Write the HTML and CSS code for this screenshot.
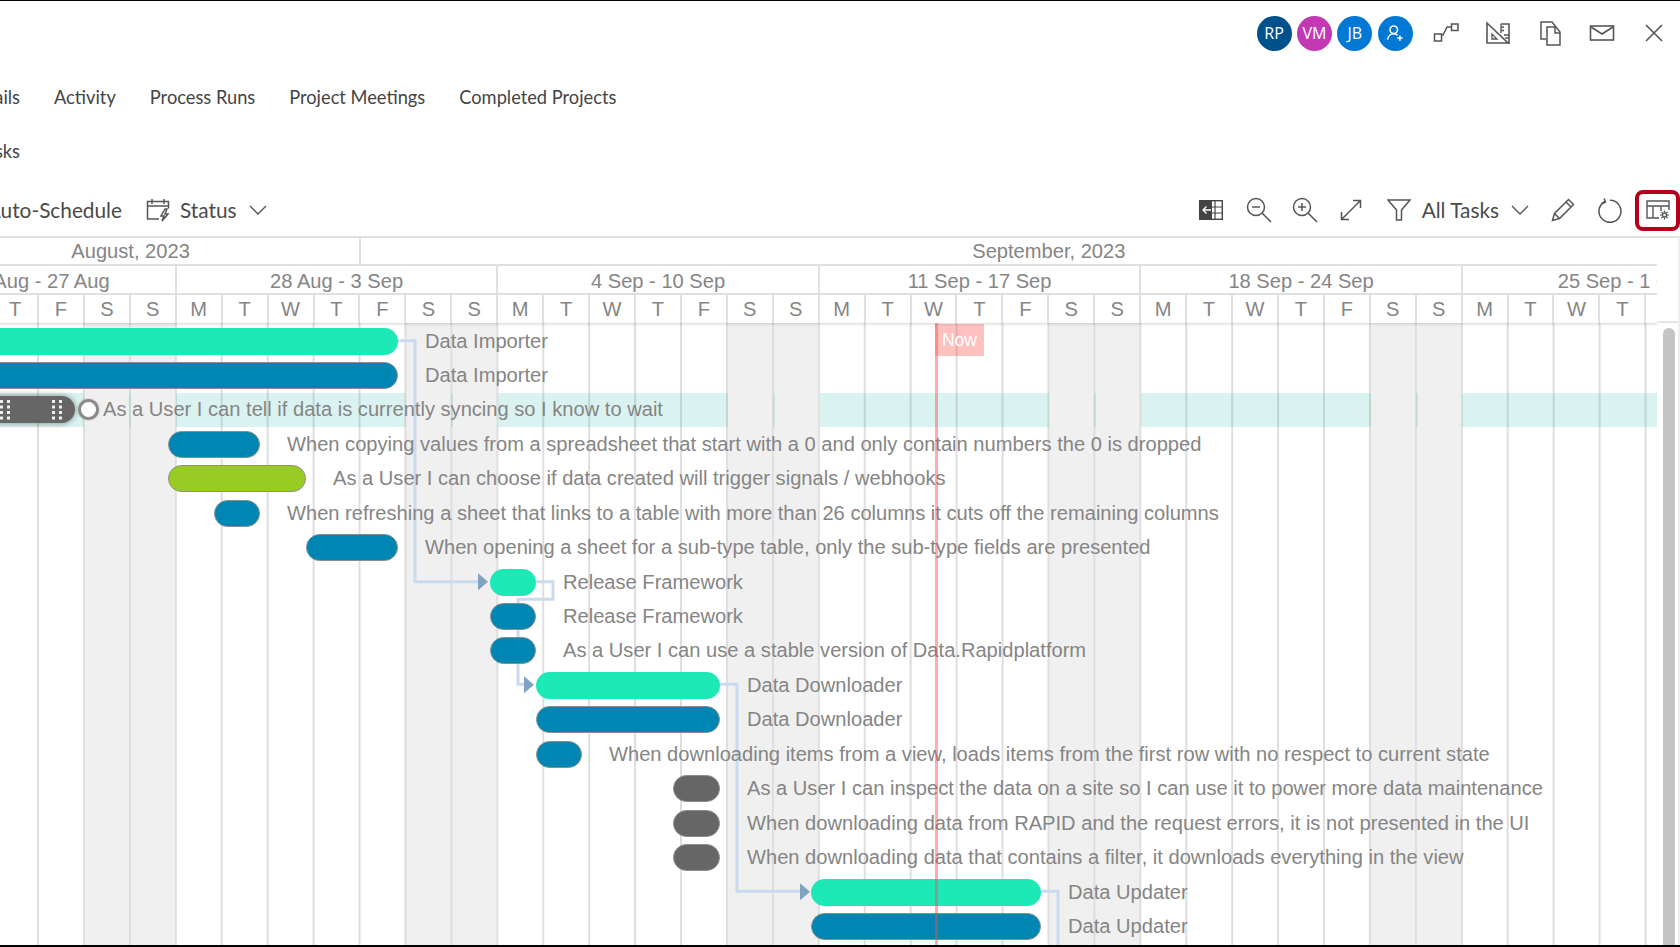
FILE: index.html
```html
<!DOCTYPE html>
<html lang="en">
<head>
<meta charset="utf-8">
<title>Project Gantt</title>
<link rel="stylesheet" href="styles.css">
</head>
<body>
<header class="topbar">
  <div class="avatars">
    <span class="avatar navy">RP</span>
    <span class="avatar magenta">VM</span>
    <span class="avatar azure">JB</span>
    <span class="avatar azure"><svg width="18" height="18" viewBox="0 0 22 22" fill="none" stroke="#fff" stroke-width="1.900"><circle cx="9.500" cy="7" r="4.600"/><path d="M2 19c.5-4 3.500-7 7.500-7 2 0 3.500.7 4.600 1.800"/><path d="M17 14v6.500M13.700 17.200h6.600"/></svg></span>
  </div>
  <div class="topicons">
    <span class="ticon"><svg width="26" height="24" viewBox="0 0 26 24" fill="none" stroke="#555" stroke-width="1.500"><rect x="1.500" y="13" width="7" height="7"/><rect x="18.500" y="3" width="6.500" height="6.500"/><path d="M8.500 14h1.500l4-8h4.500"/></svg></span>
    <span class="ticon"><svg width="26" height="24" viewBox="0 0 26 24" fill="none" stroke="#555" stroke-width="1.600"><path d="M2 2v20h21z"/><path d="M7 13v5h5z" stroke-width="1.300"/><path d="M16 3h8v20" /><path d="M16 3v9M16 6h3M16 9.500h3M19 14h5M20 17h4" stroke-width="1.300"/></svg></span>
    <span class="ticon"><svg width="24" height="26" viewBox="0 0 24 26" fill="none" stroke="#555" stroke-width="1.500"><path d="M8 19H3V2h11l4 5"/><path d="M9 7h9l4 5v13H9z"/><path d="M17 7v6h5"/></svg></span>
    <span class="ticon"><svg width="26" height="18" viewBox="0 0 26 18" fill="none" stroke="#555" stroke-width="1.600"><rect x="1.500" y="2" width="23" height="14"/><path d="M2 3l11 7 11-7"/></svg></span>
    <span class="ticon"><svg width="20" height="20" viewBox="0 0 20 20" fill="none" stroke="#555" stroke-width="1.600"><path d="M2 2l16 16M18 2L2 18"/></svg></span>
  </div>
</header>

<nav class="tabs">
  <span class="clipped tab-first">Details</span>
  <span>Activity</span>
  <span>Process Runs</span>
  <span>Project Meetings</span>
  <span>Completed Projects</span>
</nav>
<nav class="subtabs"><span class="clipped">Tasks</span></nav>

<section class="toolbar">
  <div class="tool-left">
    <span class="clipped auto">Auto-Schedule</span>
    <svg class="status-icon" width="24" height="24" viewBox="0 0 24 24" fill="none" stroke="#555" stroke-width="1.500"><path d="M13 21H1.500V3.500h21v7"/><path d="M1.500 8h21M6 1v5M18 1v5"/><path d="M19 11l-4 7h3l-2 5 6-7h-3l2-5z"/></svg>
    <span class="tool-label">Status</span>
    <svg class="chev" width="18" height="10" viewBox="0 0 18 10" fill="none" stroke="#555" stroke-width="1.400"><path d="M1 1l8 8 8-8"/></svg>
  </div>
  <div class="tool-right">
    <svg class="i-grid" width="24" height="20" viewBox="0 0 24 20"><rect x=".7" y=".7" width="22.600" height="18.600" fill="#fff" stroke="#444" stroke-width="1.400"/><rect x="1" y="1" width="12" height="18" fill="#444"/><path d="M16 1v18M1 7h22M1 13h22" stroke="#444" stroke-width="1.200" fill="none"/><path d="M12 10H4M7.500 6.500L4 10l3.500 3.500" stroke="#fff" stroke-width="1.400" fill="none"/></svg>
    <svg class="i-zout" width="26" height="26" viewBox="0 0 26 26" fill="none" stroke="#555" stroke-width="1.500"><circle cx="10" cy="10" r="8.500"/><path d="M16 16l9 9M6 10h8"/></svg>
    <svg class="i-zin" width="26" height="26" viewBox="0 0 26 26" fill="none" stroke="#555" stroke-width="1.500"><circle cx="10" cy="10" r="8.500"/><path d="M16 16l9 9M6 10h8M10 6v8"/></svg>
    <svg class="i-exp" width="22" height="22" viewBox="0 0 22 22" fill="none" stroke="#555" stroke-width="1.500"><path d="M1.500 20.500l19-19M13 1.500h7.500V9M1.500 13v7.500H9"/></svg>
    <svg class="i-fil" width="24" height="22" viewBox="0 0 24 22" fill="none" stroke="#555" stroke-width="1.500"><path d="M1 1h22l-8.500 10v10h-5V11z"/></svg>
    <span class="tool-label alltasks">All Tasks</span>
    <svg class="chev i-chev2" width="18" height="10" viewBox="0 0 18 10" fill="none" stroke="#555" stroke-width="1.400"><path d="M1 1l8 8 8-8"/></svg>
    <svg class="i-pen" width="24" height="24" viewBox="0 0 24 24" fill="none" stroke="#555" stroke-width="1.500"><path d="M1.500 22.500l2-7L17.500 1.500l5 5-14 14zM3.500 15.500l5 5M15 4l5 5"/></svg>
    <svg class="i-ref" width="25" height="25" viewBox="0 0 25 25" fill="none" stroke="#555" stroke-width="1.500"><path d="M8 3.500a11 11 0 1 0 5-1.200"/><path d="M7 .5l1.500 3.500-3.500 1.500" /></svg>
    <span class="settings-box"><svg width="24" height="20" viewBox="0 0 24 20" fill="none" stroke="#555" stroke-width="1.400"><path d="M13 18H1V1h22v9"/><path d="M1 6h22M7 6v12M15 6v5"/><circle cx="18.500" cy="15" r="2" /><path d="M18.500 10.500v2M18.500 17.500v2M14 15h2M21 15h2M15.300 11.800l1.400 1.400M20.300 16.800l1.400 1.400M21.700 11.800l-1.400 1.400M16.700 16.800l-1.400 1.400" stroke-width="1.200"/></svg></span>
  </div>
</section>

<main class="gantt">
  <div class="chart">
    <div class="head">
      <div class="months">
        <div class="month aug">August, 2023</div>
        <div class="month sep">September, 2023</div>
      </div>
      <div class="weeks">
        <div class="week week-first">21 Aug - 27 Aug</div>
        <div class="week">28 Aug - 3 Sep</div>
        <div class="week">4 Sep - 10 Sep</div>
        <div class="week">11 Sep - 17 Sep</div>
        <div class="week">18 Sep - 24 Sep</div>
        <div class="week">25 Sep - 1 Oct</div>
      </div>
      <div class="days">
        <div>M</div><div>T</div><div>W</div><div>T</div><div>F</div><div>S</div><div>S</div>
        <div>M</div><div>T</div><div>W</div><div>T</div><div>F</div><div>S</div><div>S</div>
        <div>M</div><div>T</div><div>W</div><div>T</div><div>F</div><div>S</div><div>S</div>
        <div>M</div><div>T</div><div>W</div><div>T</div><div>F</div><div>S</div><div>S</div>
        <div>M</div><div>T</div><div>W</div><div>T</div><div>F</div><div>S</div><div>S</div>
        <div>M</div><div>T</div><div>W</div><div>T</div><div>F</div><div>S</div><div>S</div>
      </div>
    </div>
    <div class="canvas">
      <svg class="links" width="1657" height="622" viewBox="0 323.800 1657 622">
        <g fill="none" stroke="#c9dbee" stroke-width="3">
          <path d="M397 340.500H415V581.500H478"/>
          <path d="M536 581.500H553V599H518V684H524"/>
          <path d="M720 684H737V891H800"/>
          <path d="M1041 891H1058V946"/>
        </g>
        <g fill="#7fa3c0">
          <path d="M478 573l10 8.500-10 8.500z"/>
          <path d="M524 676l10 8.500-10 8.500z"/>
          <path d="M800 883l10 8.500-10 8.500z"/>
        </g>
      </svg>

      <div class="row"><div class="bar green" style="margin-left:-100px;width:498px"></div><span class="label">Data Importer</span></div>
      <div class="row"><div class="bar blue" style="margin-left:-100px;width:498px"></div><span class="label">Data Importer</span></div>
      <div class="row">
        <i class="hl" style="left:0;width:84px"></i><i class="hl" style="left:129px;width:2px"></i><i class="hl" style="left:176px;width:230px"></i><i class="hl" style="left:451px;width:2px"></i><i class="hl" style="left:498px;width:230px"></i><i class="hl" style="left:773px;width:2px"></i><i class="hl" style="left:820px;width:229px"></i><i class="hl" style="left:1094px;width:2px"></i><i class="hl" style="left:1141px;width:230px"></i><i class="hl" style="left:1416px;width:2px"></i><i class="hl" style="left:1462px;width:195px"></i>
        <div class="bar grey active" style="margin-left:-40px;width:115px">
          <svg class="dots" width="10" height="20" viewBox="0 0 10 20" fill="#fff"><rect x="0" y="0" width="3" height="3"/><rect x="7" y="0" width="3" height="3"/><rect x="0" y="5.500" width="3" height="3"/><rect x="7" y="5.500" width="3" height="3"/><rect x="0" y="11" width="3" height="3"/><rect x="7" y="11" width="3" height="3"/><rect x="0" y="16.500" width="3" height="3"/><rect x="7" y="16.500" width="3" height="3"/></svg>
          <svg class="dots" width="10" height="20" viewBox="0 0 10 20" fill="#fff"><rect x="0" y="0" width="3" height="3"/><rect x="7" y="0" width="3" height="3"/><rect x="0" y="5.500" width="3" height="3"/><rect x="7" y="5.500" width="3" height="3"/><rect x="0" y="11" width="3" height="3"/><rect x="7" y="11" width="3" height="3"/><rect x="0" y="16.500" width="3" height="3"/><rect x="7" y="16.500" width="3" height="3"/></svg>
          <span class="knob"></span>
        </div>
        <span class="label">As a User I can tell if data is currently syncing so I know to wait</span>
      </div>
      <div class="row"><div class="bar blue" style="margin-left:168px;width:92px"></div><span class="label">When copying values from a spreadsheet that start with a 0 and only contain numbers the 0 is dropped</span></div>
      <div class="row"><div class="bar lime" style="margin-left:168px;width:138px"></div><span class="label">As a User I can choose if data created will trigger signals / webhooks</span></div>
      <div class="row"><div class="bar blue" style="margin-left:214px;width:46px"></div><span class="label">When refreshing a sheet that links to a table with more than 26 columns it cuts off the remaining columns</span></div>
      <div class="row"><div class="bar blue" style="margin-left:306px;width:92px"></div><span class="label">When opening a sheet for a sub-type table, only the sub-type fields are presented</span></div>
      <div class="row"><div class="bar green" style="margin-left:490px;width:46px"></div><span class="label">Release Framework</span></div>
      <div class="row"><div class="bar blue" style="margin-left:489.500px;width:46.500px"></div><span class="label">Release Framework</span></div>
      <div class="row"><div class="bar blue" style="margin-left:489.500px;width:46.500px"></div><span class="label">As a User I can use a stable version of Data.Rapidplatform</span></div>
      <div class="row"><div class="bar green" style="margin-left:536px;width:184px"></div><span class="label">Data Downloader</span></div>
      <div class="row"><div class="bar blue" style="margin-left:536px;width:184px"></div><span class="label">Data Downloader</span></div>
      <div class="row"><div class="bar blue" style="margin-left:535.500px;width:46.500px"></div><span class="label">When downloading items from a view, loads items from the first row with no respect to current state</span></div>
      <div class="row"><div class="bar grey" style="margin-left:673px;width:47px"></div><span class="label">As a User I can inspect the data on a site so I can use it to power more data maintenance</span></div>
      <div class="row"><div class="bar grey" style="margin-left:673px;width:47px"></div><span class="label">When downloading data from RAPID and the request errors, it is not presented in the UI</span></div>
      <div class="row"><div class="bar grey" style="margin-left:673px;width:47px"></div><span class="label">When downloading data that contains a filter, it downloads everything in the view</span></div>
      <div class="row"><div class="bar green" style="margin-left:811px;width:230px"></div><span class="label">Data Updater</span></div>
      <div class="row"><div class="bar blue" style="margin-left:811px;width:230px"></div><span class="label">Data Updater</span></div>

      <div class="now-line"></div>
      <div class="now-tag">Now</div>
    </div>
  </div>
  <aside class="scroll"><div class="scroll-cap"></div><div class="thumb"></div></aside>
</main>
</body>
</html>
```

FILE: styles.css
```css
* { box-sizing: border-box; }
html, body { margin: 0; height: 947px; overflow: hidden; }
body {
  width: 1680px;
  display: flex;
  flex-direction: column;
  background: #fff;
  border-top: 1px solid #000;
  border-bottom: 2px solid #000;
  font-family: Lato, "Liberation Sans", sans-serif;
  color: #4a4a4a;
}

/* top bar */
.topbar { flex: 0 0 63px; display: flex; justify-content: flex-end; align-items: center; padding-right: 12px; padding-top: 1px; }
.avatars { display: flex; gap: 5.300px; margin-right: 19.500px; }
.avatar { width: 35px; height: 35px; border-radius: 50%; display: flex; align-items: center; justify-content: center; color: #fff; font: 16px "Open Sans", sans-serif; }
.navy { background: #00508c; }
.magenta { background: #c239b3; }
.azure { background: #0078d4; }
.topicons { display: flex; gap: 24px; align-items: center; }
.ticon { width: 28px; height: 28px; display: flex; align-items: center; justify-content: center; }

/* tabs */
.tabs { flex: 0 0 65px; display: flex; align-items: center; gap: 34px; font-size: 18.250px; color: #444; }
.clipped { display: flex; justify-content: flex-end; white-space: nowrap; }
.tab-first { width: 20px; }
.subtabs { flex: 0 0 43px; display: flex; align-items: center; font-size: 18.250px; color: #444; }
.subtabs .clipped { width: 20px; }

/* toolbar */
.toolbar { flex: 0 0 65px; padding-top: 11px; display: flex; justify-content: space-between; align-items: center; font-size: 20.800px; color: #4a4a4a; }
.tool-left, .tool-right { display: flex; align-items: center; }
.auto { width: 122px; margin-top: -2px; }
.status-icon { margin-left: 24px; }
.tool-label { white-space: nowrap; margin-top: -2px; }
.tool-left .tool-label { margin-left: 10px; }
.chev { margin-left: 12px; }
.i-zout { margin-left: 23px; }
.i-zin { margin-left: 20px; }
.i-exp { margin-left: 22px; }
.i-fil { margin-left: 25px; }
.alltasks { margin-left: 11px; }
.i-pen { margin-left: 22px; }
.i-ref { margin-left: 22px; }
.settings-box { margin-left: 13px; width: 45px; height: 41px; border: 4px solid #b2001a; border-radius: 8px; display: flex; align-items: center; justify-content: center; }

/* gantt */
.gantt { flex: 1 1 auto; min-height: 0; display: flex; border-top: 2px solid #e0e0e0; margin-top: -1px; border-right: 2px solid #eee; }
.chart { width: 1657px; flex: none; position: relative; overflow: hidden; display: flex; flex-direction: column; font-family: "Liberation Sans", Arial, sans-serif; color: #858585; font-size: 20.120px; }
.head { flex: none; position: relative; z-index: 3; background: #fff; box-shadow: 0 1px 3px rgba(0,0,0,.18); margin-left: -146.700px; width: 1950px; }
.months, .weeks, .days { display: flex; }
.months { height: 28px; border-bottom: 2px solid #e0e0e0; }
.month { line-height: 26px; text-align: center; white-space: nowrap; }
.aug { width: 507.500px; padding-left: 49px; border-right: 2px solid #e0e0e0; }
.sep { width: 1376px; }
.weeks { height: 29px; border-bottom: 2px solid #e0e0e0; }
.week { width: 321.510px; flex: none; text-align: center; line-height: 30px; white-space: nowrap; border-left: 2px solid #e0e0e0; }
.week-first { padding-left: 46px; }
.days { height: 28px; }
.days div { width: 45.930px; flex: none; text-align: center; line-height: 28px; border-left: 2px solid #e0e0e0; }

.canvas {
  flex: 1 1 auto;
  min-height: 0;
  position: relative;
  overflow: hidden;
  margin-top: 0;
  padding-top: .8px;
  background-image: linear-gradient(90deg,
    #dedede 0 2px, transparent 2px 45.930px,
    #dedede 45.930px 47.930px, transparent 47.930px 91.860px,
    #dedede 91.860px 93.860px, transparent 93.860px 137.790px,
    #dedede 137.790px 139.790px, transparent 139.790px 183.720px,
    #dedede 183.720px 185.720px, transparent 185.720px 229.650px,
    #dedede 229.650px 231.650px, #f0f0f0 231.650px 275.580px,
    #dedede 275.580px 277.580px, #f0f0f0 277.580px 321.510px);
  background-size: 321.510px 100%;
  background-position: -146.700px 0;
}
.links { position: absolute; left: 0; top: .8px; }
.row { height: 34.450px; display: flex; align-items: center; position: relative; white-space: nowrap; }
.hl { position: absolute; top: 0; bottom: 0; background: rgba(30, 180, 160, .16); }
.bar { flex: none; height: 27px; border-radius: 14px; position: relative; }
.green { background: #1de9b6; }
.blue { background: #0086b3; border: 1.500px solid #8d8d8d; }
.lime { background: #99cc22; border: 1.500px solid #8d8d8d; }
.grey { background: #666; border: 1.500px solid #8d8d8d; }
.active { border: 0; margin-right: 1px; box-shadow: 0 0 6px rgba(0,0,0,.45); display: flex; align-items: center; justify-content: flex-end; gap: 42px; padding-right: 13px; }
.dots { display: block; flex: none; opacity: .9; }
.knob { position: absolute; right: -24px; top: 3px; width: 21px; height: 21px; border-radius: 50%; background: #fff; border: 3px solid #8a8a8a; box-shadow: 0 0 2px rgba(0,0,0,.3); }
.label { margin-left: 27px; position: relative; }

.now-line { position: absolute; left: 935px; top: 0; bottom: 0; width: 3px; background: rgba(255, 70, 70, .45); }
.now-tag { position: absolute; left: 935px; top: 1px; width: 49px; height: 32px; background: rgba(255, 90, 90, .38); color: #fff; font-size: 17.500px; line-height: 33px; text-align: center; }

.scroll { flex: 1 1 auto; display: flex; flex-direction: column; align-items: center; }
.scroll-cap { flex: none; height: 85px; width: 100%; border-bottom: 2px solid #e6e6e6; }
.thumb { flex: 1 1 auto; width: 12px; margin-top: 5px; margin-left: 2px; background: #c4c4c4; border-radius: 6px 6px 0 0; }
```
